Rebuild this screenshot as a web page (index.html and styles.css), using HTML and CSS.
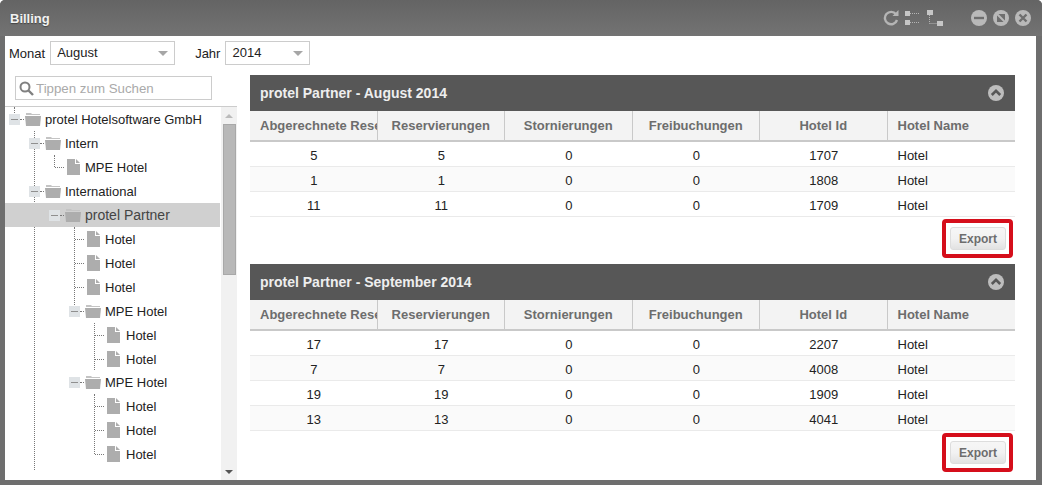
FILE: index.html
```html
<!DOCTYPE html>
<html lang="de">
<head>
    <meta charset="UTF-8">
    <meta name="viewport" content="width=device-width, initial-scale=1.0">
    <title>Billing</title>
    <link rel="stylesheet" href="styles.css">
</head>
<body>
    <svg class="defs" width="0" height="0">
        <symbol id="folder" viewBox="0 0 16 13">
            <path d="M1 0h5l1 1h8v1H1z" fill="#c4c4c4"/>
            <path d="M0 3h16l-1 10H1z" fill="#adadad"/>
        </symbol>
        <symbol id="page" viewBox="0 0 13 16">
            <path d="M0 0h8v5h5v11H0zM9 0l4 4H9z" fill="#adadad"/>
        </symbol>
    </svg>

    <div class="window">
        <div class="titlebar">
            <span class="title">Billing</span>
            <div class="title-tools">
                <svg class="tool-refresh" width="16" height="16" viewBox="0 0 16 16">
                    <path d="M13 4.2A6.2 6.2 0 1 0 14 10" fill="none" stroke="#b5b5b5" stroke-width="2.4"/>
                    <path d="M9.5 6H15.5V0z" fill="#b5b5b5"/>
                </svg>
                <svg class="tool-tree" width="15" height="15" viewBox="0 0 15 15">
                    <path d="M0 0h5v5H0zM0 9h5v5H0z" fill="#c6c6c6"/>
                    <path d="M5 2.5h10M5 11.5h10" stroke="#b5b5b5" stroke-dasharray="1 1"/>
                </svg>
                <svg class="tool-tree" width="16" height="16" viewBox="0 0 16 16">
                    <path d="M0 0h6v5H0zM10 11h6v5h-6z" fill="#c6c6c6"/>
                    <path d="M2.5 5v8.5M2.5 13.5H10" stroke="#b5b5b5" stroke-dasharray="1 1"/>
                </svg>
                <div class="win-buttons">
                    <svg width="16" height="16" viewBox="0 0 16 16">
                        <circle cx="8" cy="8" r="8" fill="#b9b9b9"/>
                        <path d="M3 8h10" stroke="#6e6e6e" stroke-width="2.4"/>
                    </svg>
                    <svg width="16" height="16" viewBox="0 0 16 16">
                        <circle cx="8" cy="8" r="8" fill="#b9b9b9"/>
                        <path d="M4 4h8v8H4z" fill="#6e6e6e"/>
                        <path d="M3.5 3.5l9 9" stroke="#b9b9b9" stroke-width="2"/>
                    </svg>
                    <svg width="16" height="16" viewBox="0 0 16 16">
                        <circle cx="8" cy="8" r="8" fill="#b9b9b9"/>
                        <path d="M4.5 4.5l7 7M11.5 4.5l-7 7" stroke="#6e6e6e" stroke-width="2.4"/>
                    </svg>
                </div>
            </div>
        </div>

        <div class="content">
            <div class="toolbar">
                <label>Monat</label>
                <div class="select select-month">August</div>
                <label class="label-year">Jahr</label>
                <div class="select select-year">2014</div>
            </div>

            <div class="main">
                <aside class="sidebar">
                    <div class="search">
                        <svg width="15" height="15" viewBox="0 0 15 15">
                            <circle cx="6" cy="6" r="4.5" fill="none" stroke="#808080" stroke-width="2"/>
                            <path d="M9.5 9.5l4.5 4.5" stroke="#808080" stroke-width="2.4"/>
                        </svg>
                        <input type="text" placeholder="Tippen zum Suchen">
                    </div>
                    <div class="tree-box">
                        <div class="tree">
                            <ul class="line-stub">
                                <li>
                                    <div class="node"><span class="toggle"></span><span class="dash"></span><svg class="icon-folder"><use href="#folder"/></svg>protel Hotelsoftware GmbH</div>
                                    <ul class="line-long">
                                        <li>
                                            <div class="node"><span class="toggle"></span><span class="dash"></span><svg class="icon-folder"><use href="#folder"/></svg>Intern</div>
                                            <ul>
                                                <li class="leaf"><span class="leaf-dash"></span><svg class="icon-page"><use href="#page"/></svg>MPE Hotel</li>
                                            </ul>
                                        </li>
                                        <li>
                                            <div class="node"><span class="toggle"></span><span class="dash"></span><svg class="icon-folder"><use href="#folder"/></svg>International</div>
                                            <ul class="line-stub">
                                                <li>
                                                    <div class="node selected"><span class="toggle"></span><span class="dash"></span><svg class="icon-folder"><use href="#folder"/></svg>protel Partner</div>
                                                    <ul class="line-partner">
                                                        <li class="leaf"><span class="leaf-dash"></span><svg class="icon-page"><use href="#page"/></svg>Hotel</li>
                                                        <li class="leaf"><span class="leaf-dash"></span><svg class="icon-page"><use href="#page"/></svg>Hotel</li>
                                                        <li class="leaf"><span class="leaf-dash"></span><svg class="icon-page"><use href="#page"/></svg>Hotel</li>
                                                        <li>
                                                            <div class="node"><span class="toggle"></span><span class="dash"></span><svg class="icon-folder"><use href="#folder"/></svg>MPE Hotel</div>
                                                            <ul class="line-full">
                                                                <li class="leaf"><span class="leaf-dash"></span><svg class="icon-page"><use href="#page"/></svg>Hotel</li>
                                                                <li class="leaf"><span class="leaf-dash"></span><svg class="icon-page"><use href="#page"/></svg>Hotel</li>
                                                            </ul>
                                                        </li>
                                                        <li>
                                                            <div class="node node-short"><span class="toggle"></span><span class="dash"></span><svg class="icon-folder"><use href="#folder"/></svg>MPE Hotel</div>
                                                            <ul>
                                                                <li class="leaf"><span class="leaf-dash"></span><svg class="icon-page"><use href="#page"/></svg>Hotel</li>
                                                                <li class="leaf"><span class="leaf-dash"></span><svg class="icon-page"><use href="#page"/></svg>Hotel</li>
                                                                <li class="leaf"><span class="leaf-dash"></span><svg class="icon-page"><use href="#page"/></svg>Hotel</li>
                                                            </ul>
                                                        </li>
                                                    </ul>
                                                </li>
                                            </ul>
                                        </li>
                                    </ul>
                                </li>
                            </ul>
                        </div>
                        <div class="scrollbar">
                            <span class="arrow-up"></span>
                            <div class="thumb"></div>
                            <span class="arrow-down"></span>
                        </div>
                    </div>
                </aside>

                <div class="reports">
                    <section class="panel">
                        <div class="panel-head">
                            <span>protel Partner - August 2014</span>
                            <svg width="16" height="16" viewBox="0 0 16 16">
                                <circle cx="8" cy="8" r="8" fill="#bdbdbd"/>
                                <path d="M3.8 10L8 5.8l4.2 4.2" fill="none" stroke="#575757" stroke-width="2.6"/>
                            </svg>
                        </div>
                        <table>
                            <thead>
                                <tr><th><span class="clip">Abgerechnete Reservierungen</span></th><th>Reservierungen</th><th>Stornierungen</th><th>Freibuchungen</th><th>Hotel Id</th><th class="name">Hotel Name</th></tr>
                            </thead>
                            <tbody>
                                <tr><td>5</td><td>5</td><td>0</td><td>0</td><td>1707</td><td class="name">Hotel</td></tr>
                                <tr><td>1</td><td>1</td><td>0</td><td>0</td><td>1808</td><td class="name">Hotel</td></tr>
                                <tr><td>11</td><td>11</td><td>0</td><td>0</td><td>1709</td><td class="name">Hotel</td></tr>
                            </tbody>
                        </table>
                        <div class="panel-foot">
                            <div class="highlight"><button type="button">Export</button></div>
                        </div>
                    </section>

                    <section class="panel">
                        <div class="panel-head">
                            <span>protel Partner - September 2014</span>
                            <svg width="16" height="16" viewBox="0 0 16 16">
                                <circle cx="8" cy="8" r="8" fill="#bdbdbd"/>
                                <path d="M3.8 10L8 5.8l4.2 4.2" fill="none" stroke="#575757" stroke-width="2.6"/>
                            </svg>
                        </div>
                        <table>
                            <thead>
                                <tr><th><span class="clip">Abgerechnete Reservierungen</span></th><th>Reservierungen</th><th>Stornierungen</th><th>Freibuchungen</th><th>Hotel Id</th><th class="name">Hotel Name</th></tr>
                            </thead>
                            <tbody>
                                <tr><td>17</td><td>17</td><td>0</td><td>0</td><td>2207</td><td class="name">Hotel</td></tr>
                                <tr><td>7</td><td>7</td><td>0</td><td>0</td><td>4008</td><td class="name">Hotel</td></tr>
                                <tr><td>19</td><td>19</td><td>0</td><td>0</td><td>1909</td><td class="name">Hotel</td></tr>
                                <tr><td>13</td><td>13</td><td>0</td><td>0</td><td>4041</td><td class="name">Hotel</td></tr>
                            </tbody>
                        </table>
                        <div class="panel-foot">
                            <div class="highlight"><button type="button">Export</button></div>
                        </div>
                    </section>
                </div>
            </div>
        </div>
    </div>
</body>
</html>
```

FILE: styles.css
```css
body {
    margin: 0;
    background-color: #fff;
    font-family: "Liberation Sans", Arial, sans-serif;
    font-size: 13px;
    color: #222;
    overflow: hidden;
}

.defs {
    position: absolute;
}

.window {
    height: 485px;
    box-sizing: border-box;
    display: flex;
    flex-direction: column;
    padding: 0 6px 5px 5px;
    background-color: #6e6e6e;
    border-radius: 5px 5px 0 0;
}

.titlebar {
    flex: none;
    height: 36px;
    display: flex;
    align-items: center;
    justify-content: space-between;
    margin: 0 -6px 0 -5px;
    padding: 0 11px 0 10px;
    background: linear-gradient(#646464, #737373);
    border-radius: 5px 5px 0 0;
}

.title {
    font-weight: bold;
    color: #f2f2f2;
    text-shadow: 0 1px 1px #444;
}

.title-tools {
    display: flex;
    align-items: center;
}

.tool-tree {
    margin-left: 6px;
}

.tool-tree + .tool-tree {
    margin-left: 7px;
}

.win-buttons {
    display: flex;
    gap: 6px;
    margin-left: 28px;
}

.content {
    flex: 1;
    min-height: 0;
    display: flex;
    flex-direction: column;
    background-color: #fff;
}

.toolbar {
    flex: none;
    display: flex;
    align-items: center;
    padding: 5px 0 0 4px;
}

.toolbar label {
    margin-right: 5px;
}

.toolbar .label-year {
    margin-left: 20px;
}

.select {
    box-sizing: border-box;
    height: 24px;
    line-height: 22px;
    padding-left: 6px;
    border: 1px solid #ccc;
    position: relative;
}

.select::after {
    content: "";
    position: absolute;
    right: 6px;
    top: 9px;
    border-left: 5px solid transparent;
    border-right: 5px solid transparent;
    border-top: 5px solid #a6a6a6;
}

.select-month {
    width: 125px;
}

.select-year {
    width: 85px;
}

.main {
    flex: 1;
    min-height: 0;
    display: flex;
    gap: 13px;
    margin-top: 10px;
}

.sidebar {
    flex: none;
    width: 232px;
    display: flex;
    flex-direction: column;
    padding-top: 1px;
}

.search {
    flex: none;
    box-sizing: border-box;
    width: 197px;
    height: 24px;
    margin: 0 0 6px 10px;
    padding-left: 3px;
    display: flex;
    align-items: center;
    gap: 2px;
    border: 1px solid #ccc;
}

.search input {
    flex: 1;
    min-width: 0;
    padding: 0;
    border: none;
    outline: none;
    font-family: inherit;
    font-size: 13.3px;
}

.search input::placeholder {
    color: #aaa;
}

.tree-box {
    flex: 1;
    min-height: 0;
    display: flex;
    border-top: 1px solid #ccc;
}

.tree {
    flex: 1;
    overflow: hidden;
    padding-left: 9px;
}

.tree ul {
    position: relative;
    list-style: none;
    margin: 0 0 0 20px;
    padding: 0;
}

.tree > ul {
    margin-left: 0;
}

.tree ul::before {
    content: "";
    position: absolute;
    left: 0;
    top: 0;
    bottom: 12px;
    border-left: 1px dotted #777;
}

.tree ul.line-stub::before {
    bottom: auto;
    height: 8px;
}

.tree ul.line-long::before {
    bottom: -4px;
}

.tree ul.line-partner::before {
    bottom: auto;
    height: 78px;
}

.tree ul.line-full::before {
    bottom: 1px;
}

.node,
.leaf {
    position: relative;
    height: 24px;
    display: flex;
    align-items: center;
    white-space: nowrap;
}

.node {
    margin-left: -5px;
}

.node-short {
    height: 23px;
}

.node.selected {
    isolation: isolate;
    font-size: 14px;
    color: #444;
}

.node.selected::before {
    content: "";
    position: absolute;
    z-index: -1;
    left: -44px;
    top: 0;
    width: 215px;
    height: 100%;
    background-color: #d0d0d0;
}

.toggle {
    position: relative;
    flex: none;
    width: 11px;
    height: 11px;
    background: linear-gradient(#8f8f8f, #8f8f8f) center / 7px 1px no-repeat #dfe3e6;
}

.dash {
    position: relative;
    flex: none;
    width: 4px;
    margin-right: 1px;
    border-top: 1px dotted #777;
}

.leaf-dash {
    flex: none;
    width: 9px;
    margin: 0 3px 0 1px;
    border-top: 1px dotted #777;
}

.icon-folder {
    position: relative;
    flex: none;
    width: 16px;
    height: 13px;
    margin-right: 4px;
}

.icon-page {
    flex: none;
    width: 13px;
    height: 16px;
    margin-right: 5px;
}

.tree ul ul ul ul ul .icon-page {
    margin-right: 6px;
}

.scrollbar {
    flex: none;
    width: 16px;
    display: flex;
    flex-direction: column;
    align-items: center;
    background-color: #f1f1f1;
}

.arrow-up,
.arrow-down {
    flex: none;
    width: 0;
    border-left: 4px solid transparent;
    border-right: 4px solid transparent;
}

.arrow-up {
    margin: 7px 0 6px;
    border-bottom: 4px solid #bbb;
}

.thumb {
    flex: none;
    box-sizing: border-box;
    width: 13px;
    height: 151px;
    background-color: #b8b8b8;
    border: 1px solid #a8a8a8;
}

.arrow-down {
    margin: auto 0 6px;
    border-top: 4px solid #555;
}

.reports {
    width: 765px;
}

.panel-head {
    height: 36px;
    box-sizing: border-box;
    display: flex;
    align-items: center;
    justify-content: space-between;
    padding: 0 11px 0 10px;
    background-color: #575757;
    color: #eee;
    font-size: 14px;
    font-weight: bold;
}

table {
    width: 100%;
    table-layout: fixed;
    border-collapse: separate;
    border-spacing: 0;
}

th {
    height: 31px;
    box-sizing: border-box;
    padding: 0;
    background-color: #f3f3f3;
    border-bottom: 2px solid #c9c9c9;
    border-right: 1px solid #c9c9c9;
    color: #6d6d6d;
    font-size: 13px;
    text-align: center;
    white-space: nowrap;
}

th:last-child {
    border-right: none;
}

/* long caption is cut off by its column, as in the grid */
.clip {
    display: block;
    box-sizing: border-box;
    padding-left: 10px;
    text-align: left;
    overflow: hidden;
}

td {
    height: 25px;
    box-sizing: border-box;
    padding: 2px 0 0;
    border-bottom: 1px solid #eaeaea;
    font-size: 13px;
    text-align: center;
}

tbody tr:nth-child(even) td {
    background-color: #fafafa;
}

th.name,
td.name {
    text-align: left;
    padding-left: 10px;
}

.panel-foot {
    display: flex;
    justify-content: flex-end;
    padding: 2px 2px 6px 0;
}

.highlight {
    padding: 4px 3px 4px 4px;
    border: 4px solid #d50e1b;
    border-radius: 4px;
}

.highlight button {
    display: block;
    width: 56px;
    height: 23px;
    padding: 0;
    background: linear-gradient(#f6f6f6, #f2f2f2 50%, #e2e2e2);
    border: 1px solid #ddd;
    border-radius: 3px;
    font-family: inherit;
    font-size: 12px;
    font-weight: bold;
    color: #6d6d6d;
}
```
